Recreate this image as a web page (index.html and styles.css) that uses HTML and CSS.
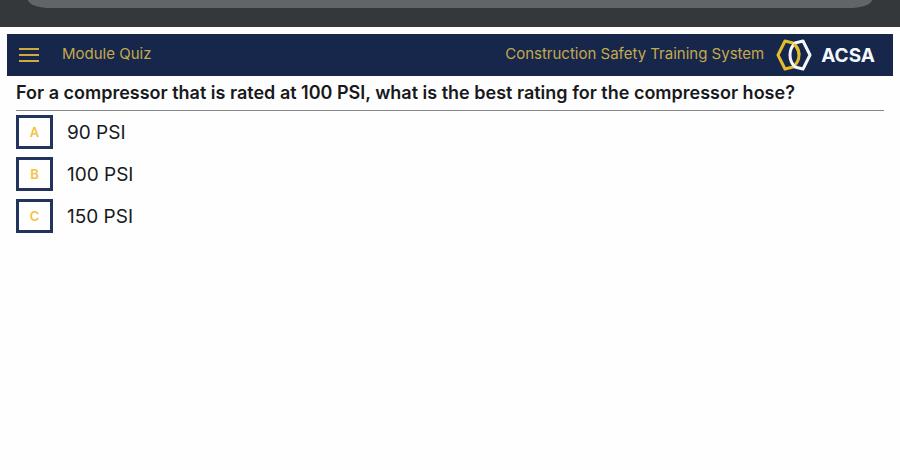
FILE: index.html
```html
<!DOCTYPE html>
<html lang="en">
<head>
    <meta charset="UTF-8">
    <meta name="viewport" content="width=device-width, initial-scale=1.0">
    <title>Module Quiz</title>
    <link rel="stylesheet" href="styles.css">
</head>
<body>
    <div class="browser-bar">
        <div class="address"></div>
    </div>

    <div class="container">
        <header class="header">
            <button class="menu-btn" type="button" aria-label="Menu">
                <svg width="20" height="14" viewBox="0 0 20 14" fill="none" stroke="currentColor" stroke-width="2">
                    <path d="M0 1h20M0 7h20M0 13h20"/>
                </svg>
            </button>
            <span class="title">Module Quiz</span>
            <span class="system">Construction Safety Training System</span>
            <div class="logo">
                <svg width="36" height="32" viewBox="0 0 36 32" fill="none" stroke-width="3" stroke-linejoin="round">
                    <path stroke="#e3bd2b" d="M9 2L17 4Q23 9 23 16T17 28L9 30L2 16Z"/>
                    <path stroke="#f4f8fb" d="M27 2L19 4Q14 9 14 16T19 28L27 30L34 16Z"/>
                    <path stroke="#e3bd2b" d="M18 5Q23 10 23 16"/>
                </svg>
                <span>ACSA</span>
            </div>
        </header>

        <main class="quiz">
            <h1>For a compressor that is rated at 100 PSI, what is the best rating for the compressor hose?</h1>
            <div class="answers">
                <button class="answer" type="button"><span class="letter">A</span>90 PSI</button>
                <button class="answer" type="button"><span class="letter">B</span>100 PSI</button>
                <button class="answer" type="button"><span class="letter">C</span>150 PSI</button>
            </div>
        </main>
    </div>
</body>
</html>
```
FILE: styles.css
```css
* {
    box-sizing: border-box;
}
body {
    margin: 0;
    font-family: "Inter", "Open Sans", sans-serif;
    background-color: #fefefe;
    color: #18191c;
}
button {
    border: none;
    background: transparent;
    padding: 0;
    font-family: inherit;
    color: inherit;
    cursor: pointer;
}
.browser-bar {
    height: 27px;
    padding: 0 28px;
    background-color: #35383b;
}
.address {
    height: 8px;
    background-color: #626568;
    border-radius: 0 0 24px 24px / 0 0 8px 8px;
}
.container {
    padding: 7px 7px 0;
}
.header {
    display: flex;
    align-items: center;
    height: 42px;
    padding: 0 18px 0 12px;
    background-color: #17264b;
    color: #c5a94b;
    font-size: 15px;
}
.menu-btn {
    display: flex;
    margin-right: 23px;
    color: #d0ab3c;
}
.title,
.system {
    padding-bottom: 4px;
}
.system {
    margin-left: auto;
}
.logo {
    display: flex;
    align-items: center;
    gap: 9px;
    margin-left: 12px;
    color: #f4f8fb;
    font-size: 19px;
    font-weight: 700;
}
.quiz {
    padding: 0 9px;
}
h1 {
    margin: 0;
    padding: 6px 0 7px;
    border-bottom: 1px solid #85878a;
    font-size: 18px;
    line-height: 21px;
    font-weight: 600;
}
.answers {
    display: flex;
    flex-direction: column;
    align-items: flex-start;
    gap: 8px;
    padding-top: 4px;
}
.answer {
    display: flex;
    align-items: center;
    gap: 14px;
    font-size: 19px;
}
.letter {
    display: flex;
    align-items: center;
    justify-content: center;
    width: 37px;
    height: 34px;
    border: 3px solid #22345d;
    color: #f5c344;
    font-size: 13px;
    font-weight: 600;
}
```
